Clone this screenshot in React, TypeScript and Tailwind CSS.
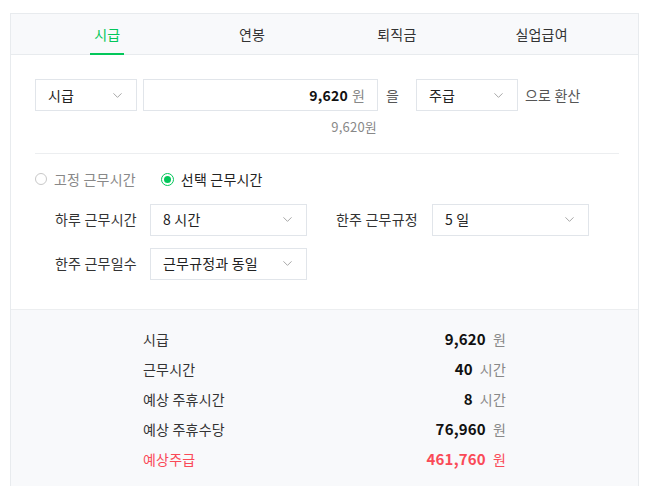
import { ChevronDown } from "lucide-react";

const tabs = ["시급", "연봉", "퇴직금", "실업급여"];

const summary = [
  { label: "시급", value: "9,620", unit: "원" },
  { label: "근무시간", value: "40", unit: "시간" },
  { label: "예상 주휴시간", value: "8", unit: "시간" },
  { label: "예상 주휴수당", value: "76,960", unit: "원" },
  { label: "예상주급", value: "461,760", unit: "원", highlight: true },
];

const Select = ({ value, className = "" }: { value: string; className?: string }) => (
  <div
    className={`flex h-[32px] items-center justify-between border border-[#e1e5ea] bg-white pl-[12px] pr-[11px] text-[14px] text-[#222] ${className}`}
  >
    <span>{value}</span>
    <ChevronDown className="h-[15px] w-[15px] text-[#8a8a8a]" strokeWidth={1.2} />
  </div>
);

const Radio = ({ checked, label }: { checked?: boolean; label: string }) => (
  <label className="flex items-center gap-[7px]">
    {checked ? (
      <span className="flex h-[13px] w-[13px] items-center justify-center rounded-full border-[1.5px] border-[#03c75a]">
        <span className="h-[7px] w-[7px] rounded-full bg-[#03c75a]" />
      </span>
    ) : (
      <span className="h-[12px] w-[12px] rounded-full border border-[#c8c8c8]" />
    )}
    <span className={checked ? "text-[#222]" : "text-[#888]"}>{label}</span>
  </label>
);

export default function App() {
  return (
    <div className="min-h-[486px] bg-white pl-[10px] pr-[9px] pt-[13px] font-['Noto_Sans_CJK_KR','Noto_Sans',sans-serif] tracking-[0.2px]">
      <div className="border border-b-0 border-[#e8ebee]">
        {/* tabs */}
        <div className="grid h-[41px] grid-cols-4 border-b border-[#e8ebee] bg-[#f8f9fb] px-[24px]">
          {tabs.map((t, i) => (
            <div key={t} className="flex justify-center">
              <div
                className={`-mb-px flex items-center px-[4px] text-[14px] ${
                  i === 0 ? "border-b-2 border-[#03c75a] pt-[2px] text-[#03c75a]" : "text-[#333]"
                }`}
              >
                {t}
              </div>
            </div>
          ))}
        </div>

        {/* converter */}
        <div className="pl-[24px] pr-[19px] pt-[24px]">
          <div className="flex items-center text-[14px]">
            <Select value="시급" className="w-[102px]" />
            <div className="ml-[6px] flex h-[32px] w-[235px] items-center justify-end border border-[#e1e5ea] pr-[12px]">
              <span className="font-bold text-[#111]">9,620</span>
              <span className="ml-[4px] text-[#888]">원</span>
            </div>
            <span className="ml-[8px] w-[30px] text-[#555]">을</span>
            <Select value="주급" className="w-[102px]" />
            <span className="ml-[7px] text-[#555]">으로 환산</span>
          </div>
          <div className="mt-[6px] w-[342px] text-right text-[13px] text-[#888]">9,620원</div>
          <div className="mt-[16px] border-t border-[#eceef0]" />

          <div className="flex items-center gap-[25px] pt-[15px] text-[14px]">
            <Radio label="고정 근무시간" />
            <Radio checked label="선택 근무시간" />
          </div>

          <div className="grid grid-cols-[95px_157px_29px_96px_157px] items-center gap-y-[12px] pb-[29px] pl-[20px] pt-[14px] text-[14px] text-[#333]">
            <span>하루 근무시간</span>
            <Select value="8 시간" />
            <span />
            <span>한주 근무규정</span>
            <Select value="5 일" />
            <span>한주 근무일수</span>
            <Select value="근무규정과 동일" />
          </div>
        </div>

        {/* summary */}
        <div className="border-t border-[#eceef0] bg-[#f8f9fb] pb-[20px] pt-[15px]">
          <div className="ml-[132px] w-[363px]">
            {summary.map((r) => (
              <div
                key={r.label}
                className={`flex h-[30px] items-center justify-between text-[14px] ${
                  r.highlight ? "text-[#fa4a57]" : "text-[#333]"
                }`}
              >
                <span>{r.label}</span>
                <span className="flex items-center gap-[7px]">
                  <span className={`text-[15px] font-bold ${r.highlight ? "text-[#fa4a57]" : "text-[#111]"}`}>
                    {r.value}
                  </span>
                  <span className={r.highlight ? "text-[#fa4a57]" : "text-[#888]"}>{r.unit}</span>
                </span>
              </div>
            ))}
          </div>
        </div>
      </div>
    </div>
  );
}
